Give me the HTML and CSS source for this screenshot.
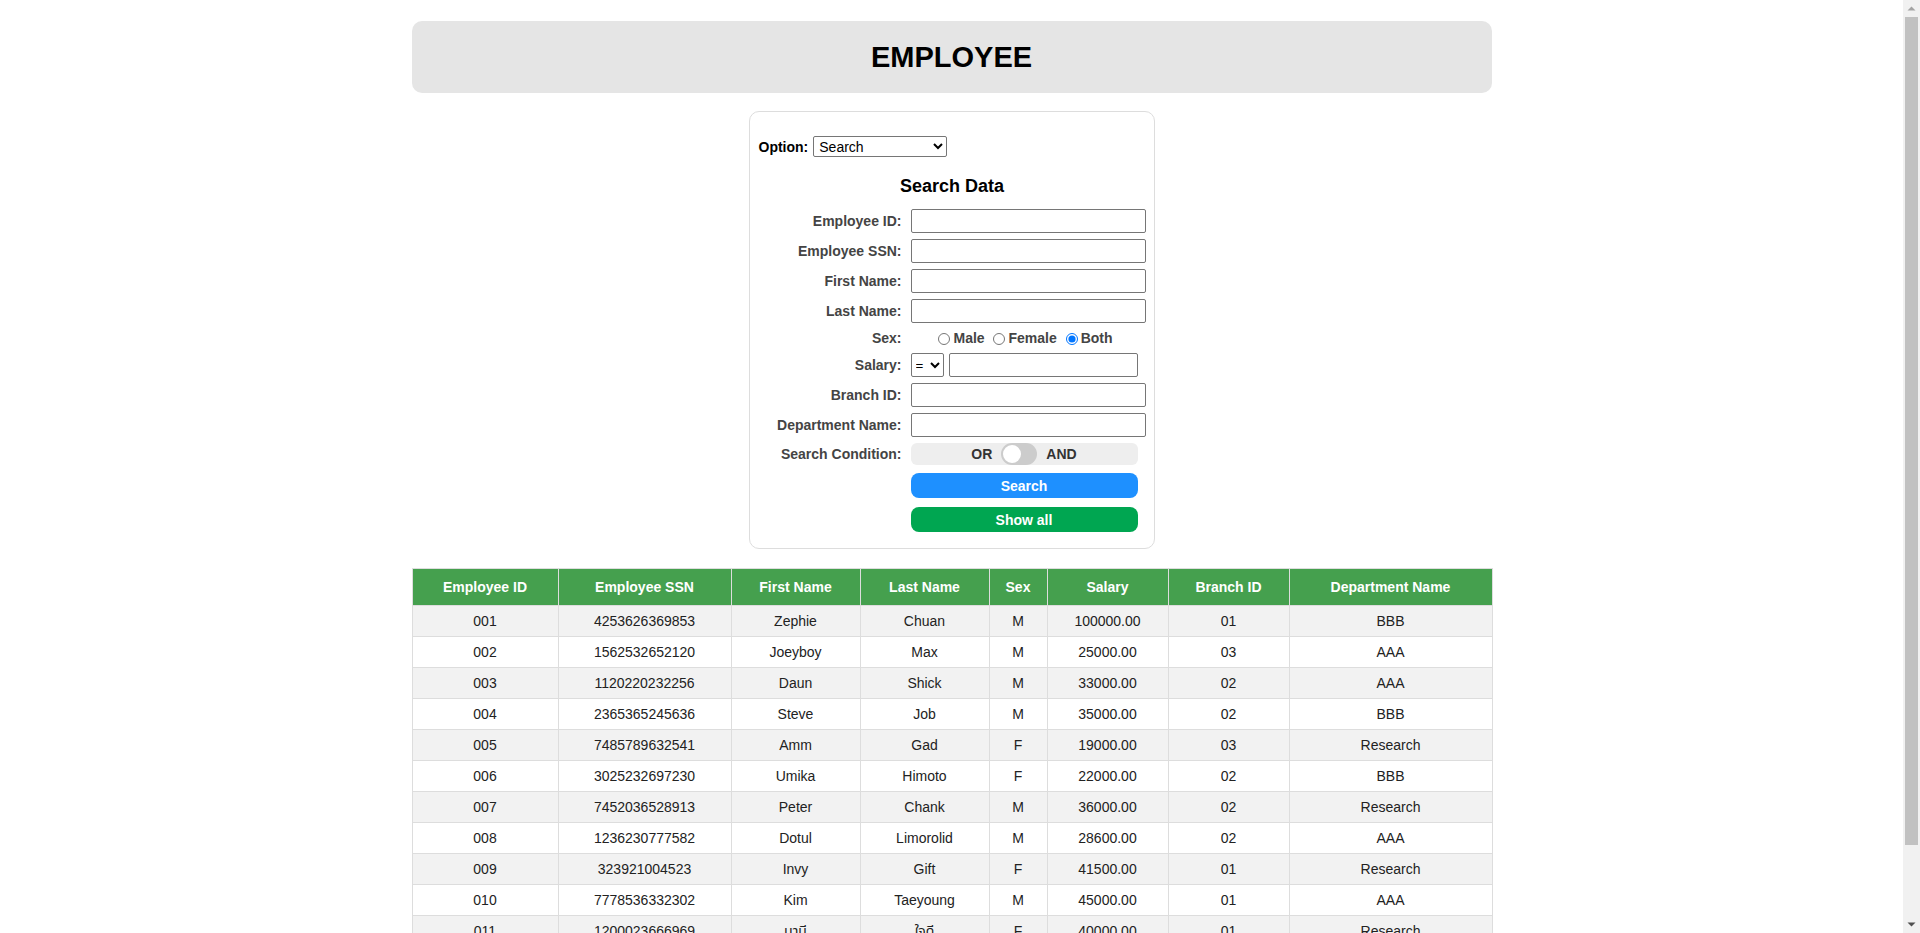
FILE: index.html
```html
<!DOCTYPE html>
<html lang="en">
<head>
<meta charset="utf-8">
<title>Employee</title>
<link rel="stylesheet" href="styles.css">
</head>
<body>
<div class="page">
  <header class="banner"><h1 class="banner-title">EMPLOYEE</h1></header>

  <section class="panel">
    <div class="option-row">
      <label class="option-label" for="opt">Option:</label>
      <select id="opt" class="option-select"><option>Search</option><option>Insert</option><option>Update</option><option>Delete</option></select>
    </div>
    <h3 class="panel-title">Search Data</h3>
    <div class="form-grid">
      <label class="f-label">Employee ID:</label><input class="f-input" type="text">
      <label class="f-label">Employee SSN:</label><input class="f-input" type="text">
      <label class="f-label">First Name:</label><input class="f-input" type="text">
      <label class="f-label">Last Name:</label><input class="f-input" type="text">
      <label class="f-label sex-label">Sex:</label>
      <div class="sex-group"><input class="radio" type="radio" name="sex">Male <input class="radio" type="radio" name="sex">Female <input class="radio" type="radio" name="sex" checked>Both</div>
      <label class="f-label">Salary:</label>
      <div class="salary-row"><select class="cmp-select"><option>=</option><option>&gt;</option><option>&lt;</option></select><input class="salary-input" type="text"></div>
      <label class="f-label">Branch ID:</label><input class="f-input" type="text">
      <label class="f-label">Department Name:</label><input class="f-input" type="text">
      <label class="f-label">Search Condition:</label>
      <div class="toggle"><span class="tg-text">OR</span><span class="tg-track"><span class="tg-knob"></span></span><span class="tg-text">AND</span></div>
      <button class="btn btn-search" type="button">Search</button>
      <button class="btn btn-all" type="button">Show all</button>
    </div>
  </section>

  <table class="data">
    <colgroup>
      <col class="c1"><col class="c2"><col class="c3"><col class="c4"><col class="c5"><col class="c6"><col class="c7"><col class="c8">
    </colgroup>
    <thead>
      <tr><th>Employee ID</th><th>Employee SSN</th><th>First Name</th><th>Last Name</th><th>Sex</th><th>Salary</th><th>Branch ID</th><th>Department Name</th></tr>
    </thead>
    <tbody>
      <tr><td>001</td><td>4253626369853</td><td>Zephie</td><td>Chuan</td><td>M</td><td>100000.00</td><td>01</td><td>BBB</td></tr>
      <tr><td>002</td><td>1562532652120</td><td>Joeyboy</td><td>Max</td><td>M</td><td>25000.00</td><td>03</td><td>AAA</td></tr>
      <tr><td>003</td><td>1120220232256</td><td>Daun</td><td>Shick</td><td>M</td><td>33000.00</td><td>02</td><td>AAA</td></tr>
      <tr><td>004</td><td>2365365245636</td><td>Steve</td><td>Job</td><td>M</td><td>35000.00</td><td>02</td><td>BBB</td></tr>
      <tr><td>005</td><td>7485789632541</td><td>Amm</td><td>Gad</td><td>F</td><td>19000.00</td><td>03</td><td>Research</td></tr>
      <tr><td>006</td><td>3025232697230</td><td>Umika</td><td>Himoto</td><td>F</td><td>22000.00</td><td>02</td><td>BBB</td></tr>
      <tr><td>007</td><td>7452036528913</td><td>Peter</td><td>Chank</td><td>M</td><td>36000.00</td><td>02</td><td>Research</td></tr>
      <tr><td>008</td><td>1236230777582</td><td>Dotul</td><td>Limorolid</td><td>M</td><td>28600.00</td><td>02</td><td>AAA</td></tr>
      <tr><td>009</td><td>323921004523</td><td>Invy</td><td>Gift</td><td>F</td><td>41500.00</td><td>01</td><td>Research</td></tr>
      <tr><td>010</td><td>7778536332302</td><td>Kim</td><td>Taeyoung</td><td>M</td><td>45000.00</td><td>01</td><td>AAA</td></tr>
      <tr><td>011</td><td>1200023666969</td><td>มานี</td><td>ใจดี</td><td>F</td><td>40000.00</td><td>01</td><td>Research</td></tr>
    </tbody>
  </table>
</div>

<div class="fake-scrollbar" aria-hidden="true">
  <svg class="sb-arrow" width="17" height="17" viewBox="0 0 17 17"><path d="M4.5 10.5 L8.5 6.5 L12.5 10.5 Z" fill="#a3a3a3"/></svg>
  <div class="sb-track"><div class="sb-thumb"></div></div>
  <svg class="sb-arrow" width="17" height="17" viewBox="0 0 17 17"><path d="M4.5 6.5 L8.5 10.5 L12.5 6.5 Z" fill="#505050"/></svg>
</div>
</body>
</html>
```
FILE: styles.css
```css
html, body {
  margin: 0;
  padding: 0;
  background: #ffffff;
}
body {
  font-family: "Liberation Sans", Arial, "Noto Sans Thai", "Noto Sans", sans-serif;
  color: #000;
  padding-right: 17px;
}
.page {
  width: 1080px;
  margin: 0 auto;
  padding: 21px 0 64px;
}
.banner {
  background: #e5e5e5;
  border-radius: 10px;
  height: 72px;
  display: flex;
  align-items: center;
  justify-content: center;
}
.banner-title {
  margin: 0;
  font-size: 29px;
  font-weight: bold;
  line-height: 1;
}
.panel {
  width: 406px;
  box-sizing: border-box;
  margin: 18px auto 0;
  border: 1px solid #dddddd;
  border-radius: 10px;
  padding: 10px 8px 16px 9px;
}
.option-row {
  margin-top: 14px;
  display: flex;
  align-items: center;
  height: 21px;
}
.option-label {
  font-size: 14px;
  font-weight: bold;
  margin-right: 5px;
}
.option-select {
  width: 134px;
  height: 21px;
  font-family: "Liberation Sans", Arial, sans-serif;
  font-size: 14px;
  border: 1px solid #767676;
  border-radius: 2px;
  background: #fff;
  padding: 0 0 0 1px;
}
.panel-title {
  margin: 18px 0 12px;
  font-size: 18px;
  line-height: 22px;
  text-align: center;
  font-weight: bold;
}
.form-grid {
  display: grid;
  grid-template-columns: 143px 235px;
  column-gap: 9px;
  row-gap: 6px;
  align-items: center;
}
.f-label {
  text-align: right;
  font-size: 14px;
  font-weight: bold;
  color: #444444;
}
.f-input {
  width: 235px;
  height: 24px;
  box-sizing: border-box;
  border: 1px solid #767676;
  border-radius: 2px;
  padding: 1px 2px;
  font-size: 13.33px;
}
.sex-group {
  height: 18px;
  line-height: 18px;
  text-align: center;
  padding-right: 10px;
  font-size: 14px;
  font-weight: bold;
  color: #444444;
  white-space: nowrap;
}
.radio {
  width: 12px;
  height: 12px;
  margin: 0 3px 0 5px;
  vertical-align: -2px;
}
.salary-row {
  display: flex;
  gap: 5px;
  width: 227px;
}
.cmp-select {
  width: 33px;
  height: 24px;
  border: 1px solid #767676;
  border-radius: 2px;
  background: #fff;
  font-size: 13.33px;
  font-family: "Liberation Sans", Arial, sans-serif;
  padding: 0;
}
.salary-input {
  width: 189px;
  height: 24px;
  box-sizing: border-box;
  border: 1px solid #767676;
  border-radius: 2px;
}
.toggle {
  width: 227px;
  height: 22px;
  background: #eeeeee;
  border-radius: 6px;
  display: flex;
  align-items: center;
  justify-content: center;
  gap: 9px;
  font-size: 14px;
  font-weight: bold;
  color: #333333;
}
.tg-track {
  width: 36px;
  height: 22px;
  border-radius: 11px;
  background: #cccccc;
  display: flex;
  align-items: center;
  padding-left: 2px;
  box-sizing: border-box;
}
.tg-knob {
  width: 18px;
  height: 18px;
  border-radius: 50%;
  background: #ffffff;
}
.btn {
  grid-column: 2;
  width: 227px;
  height: 25px;
  border: none;
  border-radius: 8px;
  color: #ffffff;
  font-family: "Liberation Sans", Arial, sans-serif;
  font-size: 14px;
  font-weight: bold;
  padding: 0;
}
.btn-search {
  background: #1e90ff;
  margin-top: 2px;
}
.btn-all {
  background: #00a651;
  margin-top: 3px;
}
.data {
  width: 1080px;
  margin-top: 19px;
  border-collapse: collapse;
  table-layout: fixed;
  font-size: 14px;
}
.c1 { width: 146px; }
.c2 { width: 173px; }
.c3 { width: 129px; }
.c4 { width: 129px; }
.c5 { width: 58px; }
.c6 { width: 121px; }
.c7 { width: 121px; }
.c8 { width: 203px; }
.data th {
  background: #45a04e;
  color: #ffffff;
  font-weight: bold;
  height: 37px;
  padding: 0 6px;
  border: 1px solid #dddddd;
  text-align: center;
  box-sizing: border-box;
}
.data td {
  height: 31px;
  padding: 0 6px;
  border: 1px solid #dddddd;
  text-align: center;
  color: #222222;
  box-sizing: border-box;
}
.data tbody tr:nth-child(odd) td {
  background: #f2f2f2;
}
.data tbody tr:nth-child(even) td {
  background: #ffffff;
}
.fake-scrollbar {
  position: fixed;
  top: 0;
  right: 0;
  width: 17px;
  height: 100vh;
  background: #f1f1f1;
  display: flex;
  flex-direction: column;
}
.sb-arrow {
  display: block;
  flex: none;
}
.sb-track {
  flex: 1;
  position: relative;
}
.sb-thumb {
  position: absolute;
  left: 2px;
  right: 2px;
  top: 0;
  height: 828px;
  background: #c1c1c1;
}
```
